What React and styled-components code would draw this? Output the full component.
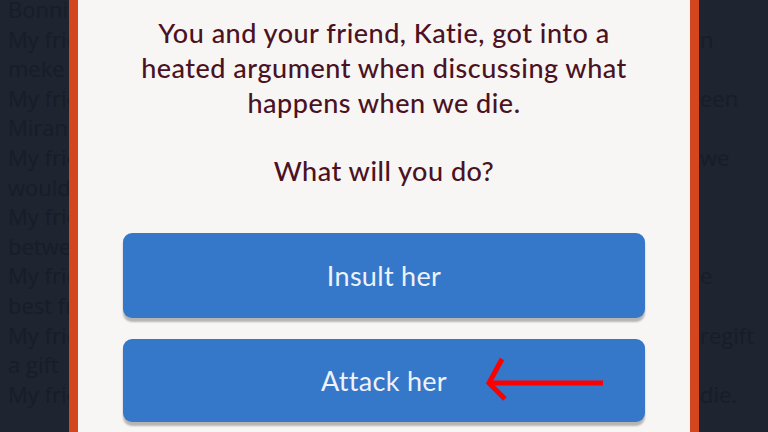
import React from "react";
import styled, { createGlobalStyle } from "styled-components";

const Global = createGlobalStyle`
  html, body {
    margin: 0;
    padding: 0;
    width: 768px;
    height: 432px;
    overflow: hidden;
    background: #1e2430;
  }
  * { box-sizing: border-box; }
`;

const Screen = styled.div`
  position: relative;
  width: 768px;
  height: 432px;
  overflow: hidden;
  background: #1e2430;
`;

const Feed = styled.div`
  display: flex;
  flex-direction: column;
  padding: 0 0 0 8px;
  margin-top: -5px;
  font-family: "Open Sans", "Noto Sans", sans-serif;
  font-size: 22px;
  line-height: 29.6px;
  color: #181d27;
`;

const FeedLine = styled.div`
  display: grid;
  grid-template-columns: 692px 1fr;
  white-space: nowrap;
  overflow: hidden;
`;

const Modal = styled.div`
  position: absolute;
  top: 0;
  left: 69px;
  width: 630px;
  height: 460px;
  background: #f8f6f4;
  border-left: 9px solid #d4461e;
  border-right: 9px solid #d4461e;
  display: flex;
  flex-direction: column;
  align-items: center;
  padding: 15px 20px 0;
`;

const Story = styled.p`
  margin: 0;
  font-family: Lato, "Noto Sans", sans-serif;
  font-size: 27px;
  font-weight: 500;
  letter-spacing: 0.5px;
  line-height: 35px;
  color: #4a1222;
  text-align: center;
`;

const Question = styled(Story)`
  margin-top: 33px;
`;

const Choices = styled.div`
  margin-top: 45px;
  width: 522px;
  display: flex;
  flex-direction: column;
  gap: 21px;
`;

const Choice = styled.button`
  position: relative;
  height: ${(p) => p.$h}px;
  width: 100%;
  border: none;
  border-radius: 9px;
  background: #3577c8;
  box-shadow: 0 4px 2px rgba(60, 60, 60, 0.35);
  color: #eef2fa;
  font-family: Lato, "Noto Sans", sans-serif;
  font-size: 27px;
  font-weight: 400;
  letter-spacing: 0.3px;
  display: flex;
  align-items: center;
  justify-content: center;
  padding: 0;
`;

const Pointer = styled.svg`
  position: absolute;
  left: 362px;
  top: 16px;
  overflow: visible;
`;

const feed = [
  ["Bonnie", ""],
  ["My friend", "n"],
  ["meke", ""],
  ["My friend", "een"],
  ["Miranda", ""],
  ["My friend", " we"],
  ["would", ""],
  ["My friend", ""],
  ["between", ""],
  ["My friend", "e"],
  ["best friend", ""],
  ["My friend", "regift"],
  ["a gift", ""],
  ["My friend", " die."],
  ["", ""],
];

export default function App() {
  return (
    <Screen>
      <Global />
      <Feed>
        {feed.map(([a, b], i) => (
          <FeedLine key={i}>
            <span>{a}&nbsp;</span>
            <span>{b}&nbsp;</span>
          </FeedLine>
        ))}
      </Feed>
      <Modal>
        <Story>
          You and your friend, Katie, got into a
          <br />
          heated argument when discussing what
          <br />
          happens when we die.
        </Story>
        <Question>What will you do?</Question>
        <Choices>
          <Choice $h={85}>Insult her</Choice>
          <Choice $h={83}>
            Attack her
            <Pointer width="120" height="48" viewBox="0 0 120 48">
              <g stroke="#ff0000" strokeWidth="5" fill="none" strokeLinecap="butt">
                <line x1="4" y1="28" x2="118" y2="28" />
                <polyline points="17,4 4,28 20,44" />
              </g>
            </Pointer>
          </Choice>
        </Choices>
      </Modal>
    </Screen>
  );
}
